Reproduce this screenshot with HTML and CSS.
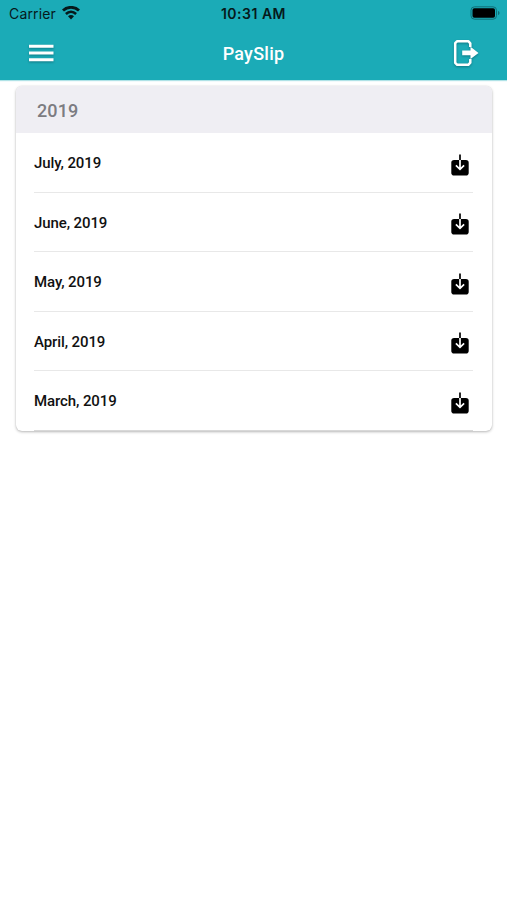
FILE: index.html
```html
<!DOCTYPE html>
<html lang="en">
<head>
<meta charset="utf-8">
<title>PaySlip</title>
<link rel="stylesheet" href="styles.css">
</head>
<body>
<svg class="defs" width="0" height="0" aria-hidden="true">
  <symbol id="download" viewBox="0 0 18 22">
    <rect x="0.3" y="6" width="17.4" height="15.6" rx="2.8" fill="#000"/>
    <path d="M9 0.4V7" stroke="#000" stroke-width="1.7" fill="none"/>
    <path d="M9 6V15.4M4.900 11.400L9 15.400L13.100 11.400" stroke="#fff" stroke-width="1.700" fill="none"/>
  </symbol>
</svg>
<header class="header">
  <div class="status">
    <div class="carrier"><span>Carrier</span>
      <svg width="18" height="14" viewBox="0 0 18 14" fill="none" stroke="#06191b">
        <path d="M1 4.500C5.500 0.300 12.500 0.300 17 4.500" stroke-width="2.900"/>
        <path d="M3.900 8C7 5.100 11 5.100 14.100 8" stroke-width="2.600"/>
        <path d="M6 10.300C7.700 8.600 10.300 8.600 12 10.300L9 13.400Z" fill="#06191b" stroke="none"/>
      </svg>
    </div>
    <div class="time">10:31 AM</div>
    <svg class="battery" width="31" height="14" viewBox="0 0 31 14">
      <rect x="1" y="0.8" width="25.500" height="12.400" rx="3.500" fill="none" stroke="#0f7078" stroke-width="1"/>
      <rect x="2.500" y="2.300" width="22.500" height="9.400" rx="1.800" fill="#000"/>
      <path d="M28 5C30 5.500 30 8.500 28 9Z" fill="#0f7078"/>
    </svg>
  </div>
  <nav class="bar">
    <svg class="icon" width="26" height="20" viewBox="0 0 26 20" fill="none" stroke="#fff" stroke-width="2.900">
      <path d="M1 3.300H25.500M1 10H25.500M1 16.700H25.500"/>
    </svg>
    <h1 class="title">PaySlip</h1>
    <svg class="icon" width="26" height="28" viewBox="0 0 26 28">
      <path d="M17.300 8V4.300L15.300 2.200H4.200L2.200 4.200V23.800L4.200 25.800H15.300L17.300 23.700V20" fill="none" stroke="#fff" stroke-width="2.500" stroke-linejoin="round"/>
      <path d="M9.200 11.600H17.500V7.700L25.500 13.900L17.500 20.100V16.200H9.200Z" fill="#fff"/>
    </svg>
  </nav>
</header>
<main class="card">
  <h2 class="year">2019</h2>
  <ul class="list">
    <li class="row"><span>July, 2019</span><svg width="18" height="22"><use href="#download"/></svg></li>
    <li class="row"><span>June, 2019</span><svg width="18" height="22"><use href="#download"/></svg></li>
    <li class="row"><span>May, 2019</span><svg width="18" height="22"><use href="#download"/></svg></li>
    <li class="row"><span>April, 2019</span><svg width="18" height="22"><use href="#download"/></svg></li>
    <li class="row"><span>March, 2019</span><svg width="18" height="22"><use href="#download"/></svg></li>
  </ul>
</main>
</body>
</html>
```

FILE: styles.css
```css
* { box-sizing: border-box; }
body {
  min-height: 100vh;
  margin: 0;
  background: #fff;
  font-family: Roboto, "Liberation Sans", sans-serif;
}
.defs { display: block; }
.header {
  height: 80px;
  background: #1babb7;
  box-shadow: 0 1px 1px rgba(27, 171, 183, .35);
}
.status {
  display: grid;
  grid-template-columns: 1fr auto 1fr;
  align-items: center;
  height: 26px;
  padding: 0 6px 0 9px;
  font-family: Inter, sans-serif;
  font-size: 14px;
  color: #06191b;
}
.carrier { display: flex; align-items: center; gap: 6px; letter-spacing: .15px; }
.carrier span, .time { padding-top: 1px; }
.time { margin-left: -3px; font-weight: 600; letter-spacing: .5px; }
.battery { justify-self: end; }
.bar {
  display: flex;
  align-items: center;
  justify-content: space-between;
  height: 54px;
  padding: 0 28px;
}
.icon { filter: drop-shadow(0 1px 1px rgba(0, 60, 70, .45)); }
.title {
  margin: 0;
  font-size: 18px;
  font-weight: 500;
  letter-spacing: .25px;
  color: #fff;
}
.card {
  height: 345px;
  margin: 6px 15px 0 16px;
  border-radius: 6px;
  background: #fff;
  box-shadow: 0 0 1px rgba(0, 0, 0, .15), 0 1px 3px rgba(0, 0, 0, .28);
}
.year {
  height: 47px;
  margin: 0;
  padding-left: 21px;
  border-radius: 6px 6px 0 0;
  background: #efeef3;
  font-size: 18px;
  font-weight: 500;
  letter-spacing: .1px;
  line-height: 49px;
  color: #7c7c81;
}
.list { margin: 0; padding: 0 19px 0 18px; list-style: none; }
.row {
  display: flex;
  align-items: center;
  justify-content: space-between;
  height: 59.5px;
  padding: 2px 4px 0 0;
  border-bottom: 1px solid #e8e8e8;
  font-size: 15px;
  font-weight: 500;
  letter-spacing: -.1px;
  color: #111;
}
.row:last-child { border-bottom-color: #d8d8d8; }
.row svg { margin-top: 3px; }
```
